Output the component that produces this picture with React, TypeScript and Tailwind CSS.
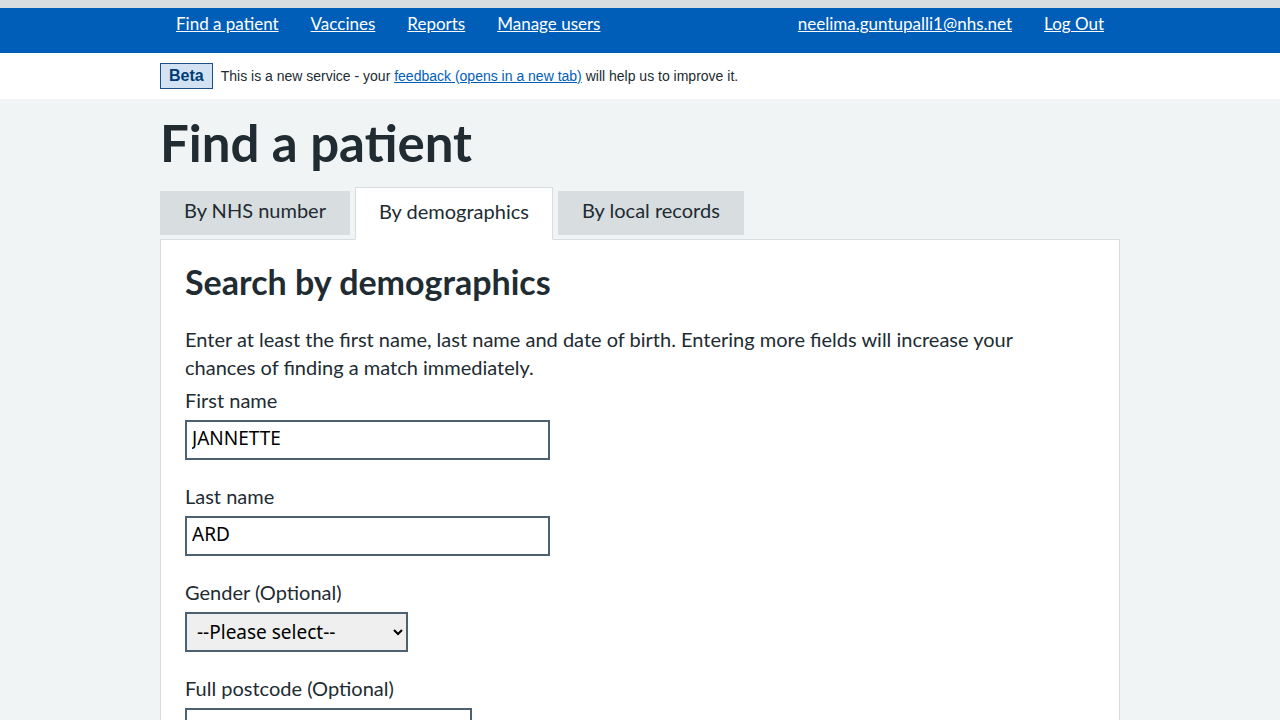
import React, { useState } from 'react';

const navLinks = ['Find a patient', 'Vaccines', 'Reports', 'Manage users'];
const tabs = ['By NHS number', 'By demographics', 'By local records'];

const font = 'font-["Lato","Noto_Sans",sans-serif]';

function Field({ label, value, width }: { label: string; value: string; width: string }) {
  const [val, setVal] = useState(value);
  return (
    <div className="mb-[22px]">
      <label className="block text-[20px] leading-[28px] text-[#212b32] mb-[6px]">{label}</label>
      <input
        type="text"
        value={val}
        onChange={(e) => setVal(e.target.value)}
        className={`${width} h-[40px] border-2 border-[#4c6272] bg-white px-[5px] pb-[4px] text-[19px] text-black font-["Noto_Sans",sans-serif] outline-none`}
      />
    </div>
  );
}

export default function App() {
  const [tab, setTab] = useState(1);

  return (
    <div className={`min-h-screen bg-[#f0f4f5] ${font}`}>
      <div className="h-[8px] bg-[#d8dde0]" />
      <header className="bg-[#005eb8] h-[45px]">
        <div className="w-[960px] mx-auto flex justify-between">
          <nav className="flex">
            {navLinks.map((link) => (
              <a key={link} href="#" className="px-[16px] pt-[4px] text-[17px] leading-[24px] text-white underline">
                {link}
              </a>
            ))}
          </nav>
          <div className="flex">
            <a href="#" className="px-[16px] pt-[4px] text-[17px] leading-[24px] text-white underline">
              neelima.guntupalli1@nhs.net
            </a>
            <a href="#" className="px-[16px] pt-[4px] text-[17px] leading-[24px] text-white underline">
              Log Out
            </a>
          </div>
        </div>
      </header>

      <div className="bg-white h-[46px]">
        <div className='w-[960px] mx-auto flex items-center h-full font-["Liberation_Sans",Arial,sans-serif]'>
          <span className="border border-[#1d4f86] bg-[#d2e2f2] text-[#003d78] font-bold text-[16px] leading-[24px] px-[8px]">
            Beta
          </span>
          <p className="ml-[8px] text-[14px] text-[#212b32]">
            This is a new service - your{' '}
            <a href="#" className="text-[#005eb8] underline">feedback (opens in a new tab)</a> will help us to improve it.
          </p>
        </div>
      </div>

      <main className="w-[960px] mx-auto pt-[14px]">
        <h1 className="text-[51px] leading-[60px] font-bold text-[#212b32] mb-[14px]">Find a patient</h1>

        <div className="flex items-end gap-[5px]">
          {tabs.map((t, i) =>
            i === tab ? (
              <button
                key={t}
                onClick={() => setTab(i)}
                className="relative -mb-px h-[53px] px-[23px] pt-[9px] flex items-start bg-white border border-[#d8dde0] border-b-white text-[20px] leading-[28px] text-[#212b32] z-10"
              >
                {t}
              </button>
            ) : (
              <button
                key={t}
                onClick={() => setTab(i)}
                className="h-[44px] mb-[4px] px-[24px] pt-[5px] flex items-start bg-[#d8dde0] text-[20px] leading-[28px] text-[#212b32]"
              >
                {t}
              </button>
            )
          )}
        </div>

        <section className="bg-white border border-[#d8dde0] px-[24px] pt-[22px] pb-[24px]">
          <h2 className="text-[34px] leading-[40px] font-bold text-[#212b32] mb-[23px]">Search by demographics</h2>
          <p className="text-[20px] leading-[28px] text-[#212b32] mb-[5px] max-w-[870px]">
            Enter at least the first name, last name and date of birth. Entering more fields will increase your chances of finding a match immediately.
          </p>
          <Field label="First name" value="JANNETTE" width="w-[365px]" />
          <Field label="Last name" value="ARD" width="w-[365px]" />
          <div className="mb-[22px]">
            <label className="block text-[20px] leading-[28px] text-[#212b32] mb-[6px]">Gender (Optional)</label>
            <select className='w-[223px] h-[40px] border-2 border-[#4c6272] bg-[#efefef] px-[6px] text-[19px] text-black font-["Noto_Sans",sans-serif]'>
              <option>--Please select--</option>
              <option>Male</option>
              <option>Female</option>
            </select>
          </div>
          <Field label="Full postcode (Optional)" value="" width="w-[287px]" />
        </section>
      </main>
    </div>
  );
}
